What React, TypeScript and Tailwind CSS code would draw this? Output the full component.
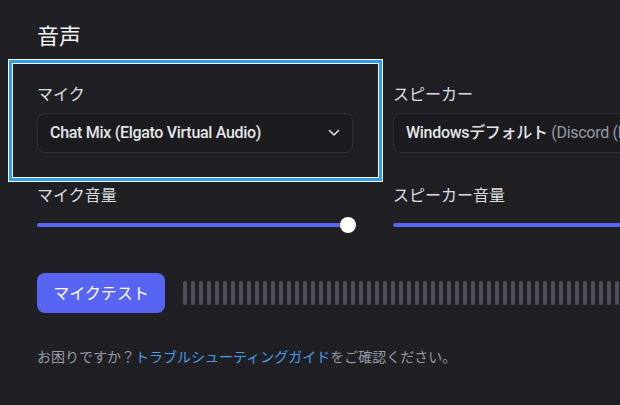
import React from 'react';

const FONT = "font-['Noto_Sans','Noto_Sans_CJK_JP',sans-serif]";
const SELECT_FONT = "font-['Roboto','Noto_Sans_CJK_JP',sans-serif]";

const Chevron: React.FC = () => (
  <svg width="12" height="8" viewBox="0 0 12 8" fill="none" className="shrink-0">
    <path d="M1.5 1.5L6 6l4.5-4.5" stroke="#dbdee1" strokeWidth="1.6" strokeLinecap="round" strokeLinejoin="round" />
  </svg>
);

const Slider: React.FC<{ trackWidth: string; knob?: boolean }> = ({ trackWidth, knob }) => (
  <div className="relative h-4 flex items-center mt-3">
    <div className={`h-1 rounded-full bg-[#5865f2] ${trackWidth}`} />
    {knob && <div className="absolute left-[303px] top-0 size-4 rounded-full bg-white" />}
  </div>
);

export default function App() {
  const bars = Array.from({ length: 60 });

  return (
    <div className={`w-[620px] h-[405px] overflow-hidden bg-[#202024] pl-[37px] pt-[21px] ${FONT}`}>
      <h2 className="text-[22px] leading-[28px] text-[#f2f3f5]">音声</h2>

      <div className="grid grid-cols-[316px_316px] gap-x-10 mt-[35px]">
        {/* マイク (focused) */}
        <div className="relative isolate">
          <div className="pointer-events-none absolute -left-[25px] -top-[21px] -right-[26px] -bottom-[25px] border border-white shadow-[0_0_0_3px_#2d9ef2,0_0_0_4px_#ffffff]" />
          <div className="text-[16px] leading-5 text-[#dbdee1]">マイク</div>
          <div className="mt-[9px] h-10 flex items-center justify-between rounded-lg border border-[#2e2e34] bg-[#1c1c20] pl-3 pr-3">
            <span className={`text-[16px] font-medium text-[#e3e5e8] tracking-[-0.3px] whitespace-nowrap ${SELECT_FONT}`}>
              Chat Mix (Elgato Virtual Audio)
            </span>
            <Chevron />
          </div>
        </div>

        {/* スピーカー */}
        <div>
          <div className="text-[16px] leading-5 text-[#dbdee1]">スピーカー</div>
          <div className="mt-[9px] h-10 flex items-center rounded-lg border border-[#2e2e34] bg-[#1c1c20] pl-3 w-[340px] overflow-hidden">
            <span className={`text-[16px] whitespace-nowrap tracking-[-0.3px] ${SELECT_FONT}`}>
              <span className="font-medium text-[#e3e5e8]">Windowsデフォルト</span>
              <span className="text-[#949ba4]"> (Discord (Realtek Audio))</span>
            </span>
          </div>
        </div>

        <div className="mt-8">
          <div className="text-[16px] leading-5 text-[#dbdee1]">マイク音量</div>
          <Slider trackWidth="w-[311px]" knob />
        </div>

        <div className="mt-8">
          <div className="text-[16px] leading-5 text-[#dbdee1]">スピーカー音量</div>
          <Slider trackWidth="w-[260px]" />
        </div>
      </div>

      <div className="mt-10 flex items-center">
        <button className="h-10 w-32 shrink-0 rounded-lg bg-[#5865f2] text-[16px] text-white">
          マイクテスト
        </button>
        <div className="ml-[18px] flex gap-1 overflow-hidden">
          {bars.map((_, i) => (
            <div key={i} className="h-6 w-1 shrink-0 rounded-full bg-[#4e4f58]" />
          ))}
        </div>
      </div>

      <p className="mt-[35px] text-[14px] leading-[18px] text-[#949ba4]">
        お困りですか？<span className="text-[#479bea]">トラブルシューティングガイド</span>をご確認ください。
      </p>
    </div>
  );
}
